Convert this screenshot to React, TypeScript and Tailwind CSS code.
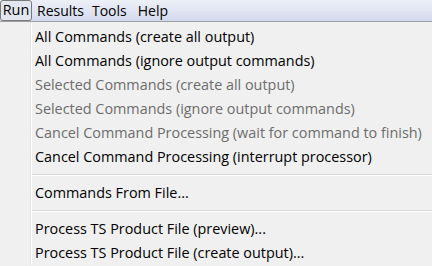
const items = [
  { label: "All Commands (create all output)", enabled: true },
  { label: "All Commands (ignore output commands)", enabled: true },
  { label: "Selected Commands (create all output)", enabled: false },
  { label: "Selected Commands (ignore output commands)", enabled: false },
  { label: "Cancel Command Processing (wait for command to finish)", enabled: false },
  { label: "Cancel Command Processing (interrupt processor)", enabled: true },
];

const Row = ({ label, enabled = true }: { label: string; enabled?: boolean }) => (
  <div
    className={`h-[24px] flex items-center pl-[3px] whitespace-nowrap ${
      enabled ? "text-[#000000]" : "text-[#6d6d6d]"
    }`}
  >
    {label}
  </div>
);

const Separator = () => (
  <div className="h-[12px] flex flex-col justify-center">
    <div className="h-px bg-[#d7d7d7]" />
    <div className="h-px bg-white" />
  </div>
);

export default function App() {
  return (
    <div
      className="w-[432px] h-[266px] overflow-hidden bg-[#f0f0f0] text-[14.4px] leading-none"
      style={{ fontFamily: '"Segoe UI", "Open Sans", sans-serif' }}
    >
      <div className="h-[22px] flex items-stretch bg-gradient-to-b from-[#eef0f7] to-[#d3daee] border-b border-[#a0a0a0]">
        <div className="w-[32px] flex items-center justify-center mr-[4px] border border-[#7a7a7a] rounded-[3px] bg-[#e3e6ee]">
          Run
        </div>
        <div className="flex items-center pl-px pr-[8px] text-[14px]">Results</div>
        <div className="flex items-center pr-[11px] text-[14px]">Tools</div>
        <div className="flex items-center text-[14px]">Help</div>
      </div>
      <div className="flex">
        <div className="w-[31px] shrink-0 border-r border-[#e2e2e2]" />
        <div className="w-px bg-white" />
        <div className="flex-1 pt-[3px]">
          {items.map((it) => (
            <Row key={it.label} label={it.label} enabled={it.enabled} />
          ))}
          <Separator />
          <Row label="Commands From File..." />
          <Separator />
          <Row label="Process TS Product File (preview)..." />
          <Row label="Process TS Product File (create output)..." />
        </div>
      </div>
    </div>
  );
}
